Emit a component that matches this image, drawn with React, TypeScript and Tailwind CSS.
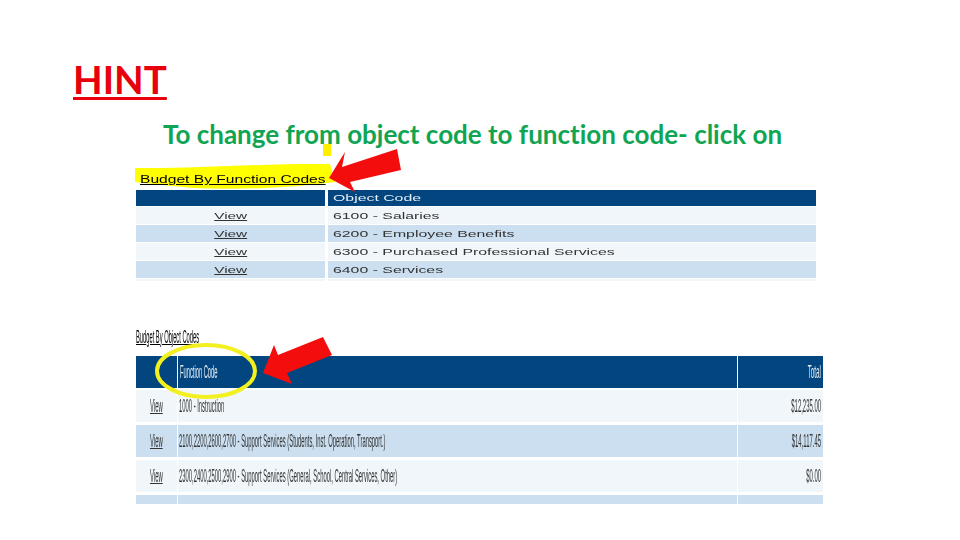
const objectRows = [
  { code: '6100 - Salaries', bg: 'bg-[#f1f6fb]' },
  { code: '6200 - Employee Benefits', bg: 'bg-[#cbdff0]' },
  { code: '6300 - Purchased Professional Services', bg: 'bg-[#f1f6fb]' },
  { code: '6400 - Services', bg: 'bg-[#cbdff0]' },
];

const functionRows = [
  { code: '1000 - Instruction', total: '$12,235.00', bg: 'bg-[#f1f6fb]', gap: 'mt-[2px]' },
  { code: '2100,2200,2600,2700 - Support Services (Students, Inst. Operation, Transport.)', total: '$14,117.45', bg: 'bg-[#cbdff0]', gap: 'mt-[3px]' },
  { code: '2300,2400,2500,2900 - Support Services (General, School, Central Services, Other)', total: '$0.00', bg: 'bg-[#f1f6fb]', gap: 'mt-[3px]' },
];

export default function App() {
  return (
    <div className="relative w-[960px] h-[540px] overflow-hidden bg-white font-['Liberation_Sans',sans-serif]">
      <div className="pl-[74px] pt-[56px]">
        <h1 className="h-[46px] -ml-px font-['Lato',sans-serif] text-[38.5px] leading-[46px] font-bold text-[#e8000d] underline decoration-[3px] underline-offset-[3px]">
          HINT
        </h1>
      </div>
      <p className="mt-[17px] ml-[163px] h-[30px] whitespace-nowrap font-['Lato',sans-serif] text-[26px] leading-[30px] font-bold text-[#0fa553] [font-variant-ligatures:none]">
        To change from object code to function code- click on
      </p>

      {/* Yellow marker behind the first link */}
      <svg className="absolute left-0 top-0" width="960" height="540">
        <path d="M135 168 C190 169 270 163 330 164 L335 182 C290 188 240 190 193 188 C170 186 145 183 135 182 Z" fill="#ffff00" />
        <rect x="323" y="144" width="8" height="12" fill="#ffee00" />
      </svg>

      <div className="relative ml-[136px] mt-[21px] w-[680px]">
        <div className="h-[20px] pl-[4px] pt-[4px]">
          <span className="block origin-left scale-x-[1.56] whitespace-nowrap text-[10px] leading-[12px] text-black underline blur-[0.3px]">
            Budget By Function Codes
          </span>
        </div>
        <div className="flex h-[16px] gap-[3px]">
          <div className="w-[189px] shrink-0 bg-[#03467f]" />
          <div className="min-w-0 flex-1 bg-[#03467f] pl-[5px] text-[9px] leading-[16px] text-[#e6eef6]">
            <span className="block origin-left scale-x-[1.76] whitespace-nowrap blur-[0.3px]">Object Code</span>
          </div>
        </div>
        {objectRows.map((row) => (
          <div key={row.code} className="mt-[1px] flex h-[17px] gap-[3px] text-[9px] leading-[19px] text-[#333]">
            <div className={`w-[189px] shrink-0 text-center ${row.bg}`}>
              <span className="inline-block scale-x-[1.7] underline blur-[0.3px]">View</span>
            </div>
            <div className={`min-w-0 flex-1 pl-[5px] ${row.bg}`}>
              <span className="block origin-left scale-x-[1.76] whitespace-nowrap blur-[0.3px]">{row.code}</span>
            </div>
          </div>
        ))}
        <div className="mt-[1px] flex h-[2px] gap-[3px]">
          <div className="w-[189px] shrink-0 bg-[#f1f6fb]" />
          <div className="flex-1 bg-[#f1f6fb]" />
        </div>
      </div>

      <div className="relative ml-[136px] mt-[46px] w-[687px]">
        <div className="h-[29px] pt-[1px]">
          <span className="block origin-left scale-x-[0.32] whitespace-nowrap text-[18px] leading-[18px] text-black underline blur-[0.3px]">
            Budget By Object Codes
          </span>
        </div>
        <div className="flex h-[32px] gap-px bg-white text-[#e6eef6]">
          <div className="w-[41px] shrink-0 bg-[#03467f]" />
          <div className="w-[559px] shrink-0 bg-[#03467f] pl-[2px] text-[18px] leading-[32px]">
            <span className="block origin-left scale-x-[0.32] whitespace-nowrap blur-[0.3px]">Function Code</span>
          </div>
          <div className="min-w-0 flex-1 bg-[#03467f] pr-[2px] text-right text-[18px] leading-[32px]">
            <span className="-ml-5 block origin-right scale-x-[0.35] whitespace-nowrap blur-[0.3px]">Total</span>
          </div>
        </div>
        {functionRows.map((row) => (
          <div key={row.code} className={`flex h-[32px] gap-px text-[18px] leading-[32px] text-[#333] ${row.gap}`}>
            <div className={`w-[41px] shrink-0 text-center ${row.bg}`}>
              <span className="inline-block scale-x-[0.33] underline blur-[0.3px]">View</span>
            </div>
            <div className={`w-[559px] shrink-0 pl-[1px] ${row.bg}`}>
              <span className="block origin-left scale-x-[0.325] whitespace-nowrap blur-[0.3px]">{row.code}</span>
            </div>
            <div className={`min-w-0 flex-1 pr-[2px] text-right ${row.bg}`}>
              <span className="-ml-5 block origin-right scale-x-[0.33] whitespace-nowrap blur-[0.3px]">{row.total}</span>
            </div>
          </div>
        ))}
        <div className="mt-[3px] flex h-[9px] gap-px">
          <div className="w-[41px] shrink-0 bg-[#cbdff0]" />
          <div className="w-[559px] shrink-0 bg-[#cbdff0]" />
          <div className="flex-1 bg-[#cbdff0]" />
        </div>
      </div>

      {/* Red arrows and yellow circle drawn over the tables */}
      <svg className="absolute left-0 top-0" width="960" height="540">
        <polygon points="329,178 345,152 342,167 397,149 401,170 350,182 355,192" fill="#f40d0d" />
        <polygon points="263,373 274,345 278,355 323,337 332,355 287,373 292,384" fill="#f40d0d" />
        <ellipse cx="206" cy="371" rx="49" ry="26" fill="none" stroke="#f2f01e" strokeWidth="4" />
      </svg>
    </div>
  );
}
